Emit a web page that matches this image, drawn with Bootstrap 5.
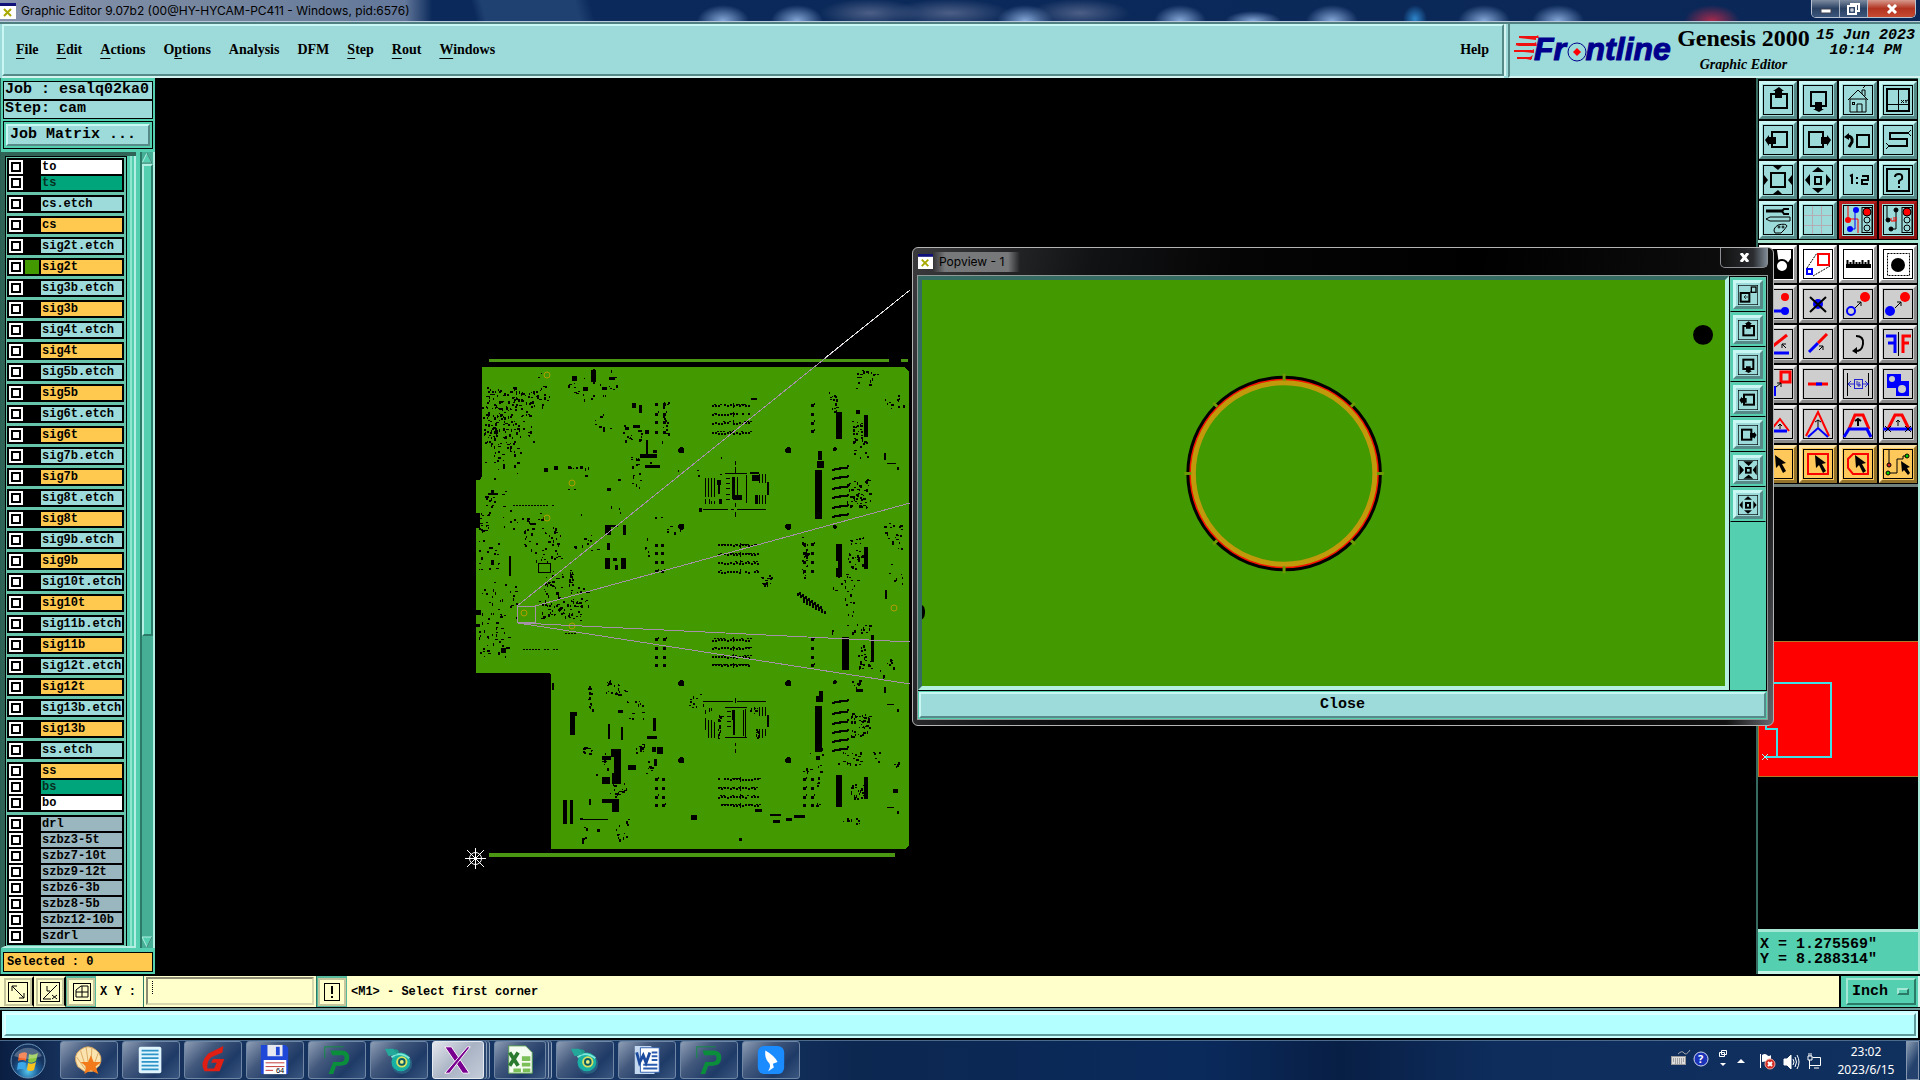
<!DOCTYPE html>
<html lang="en">
<head>
<meta charset="utf-8">
<meta name="viewport" content="width=device-width, initial-scale=1">
<title>Graphic Editor 9.07b2</title>
<link href="https://cdn.jsdelivr.net/npm/bootstrap@5.3.0/dist/css/bootstrap.min.css" rel="stylesheet">
<style>
:root{--panel:#9cdbda;--teal:#54cfaf;--pale:#b4efe4;--deep:#356b60;--shade:#568a88;--lit:#c9f7f4}
body{background:#000;color:#000;font:bold 15px/18px "Liberation Mono",monospace;height:100vh;overflow:hidden}
button,input,select{font:inherit;color:inherit;padding:0;border-radius:0}
.ui-font{font:normal 12px/16px "Noto Sans",sans-serif}
.cap-font{font:normal 12px/16px Inter,"Noto Sans",sans-serif}
.small-mono{font-size:12px;line-height:16px}
/* window title */
.title-strip{height:22px;border-bottom:1px solid #b7c9d8;background:
 radial-gradient(ellipse 26px 16px at 723px 21px,#86a9da,transparent),
 radial-gradient(ellipse 26px 16px at 797px 21px,#86a9da,transparent),
 radial-gradient(ellipse 50px 14px at 870px 13px,#4c5f86,transparent),
 radial-gradient(ellipse 60px 14px at 950px 13px,#4c5f86,transparent),
 radial-gradient(ellipse 50px 14px at 1080px 13px,#4c5f86,transparent),
 radial-gradient(ellipse 28px 16px at 1025px 21px,#86a9da,transparent),
 radial-gradient(ellipse 26px 16px at 1180px 21px,#86a9da,transparent),
 radial-gradient(ellipse 28px 10px at 1253px 21px,#86a9da,transparent),
 radial-gradient(ellipse 26px 16px at 1332px 21px,#86a9da,transparent),
 radial-gradient(ellipse 12px 14px at 1415px 19px,#2d86cc,transparent),
 radial-gradient(ellipse 26px 16px at 1484px 21px,#86a9da,transparent),
 radial-gradient(ellipse 26px 16px at 1558px 21px,#86a9da,transparent),
 radial-gradient(ellipse 28px 16px at 1712px 21px,#a82a4c,transparent),
 linear-gradient(75deg,transparent 460px,#1f4172 470px,#1f4172 560px,transparent 575px),
 linear-gradient(90deg,#8793ad 0,#76879f 200px,#62779a 405px,#0b2a5b 432px,#0a2757 100%)}
.title-strip .caption{padding-left:5px}
.sys-btns{height:18px;border:1px solid #b9c3d0;border-top:0;border-radius:0 0 5px 5px;overflow:hidden}
.sys-btns button{border:0;border-right:1px solid #a8b4c4;background:linear-gradient(#7d8ba0,#2a4163 50%,#3c567c);width:28px;display:flex;align-items:center;justify-content:center}
.sys-btns button:last-child{width:47px;border-right:0;background:linear-gradient(#d79a8e,#b23320 50%,#c84a30)}
/* header */
.head-row{height:56px;background:var(--panel);border-top:2px solid #4f7f80}
.menu-panel{border:2px solid var(--lit);border-right-color:var(--shade);border-bottom-color:var(--shade);box-shadow:0 2px 0 #d4f4f2,2px 0 0 #d4f4f2;margin:0 3px 2px 2px;padding:0 13px 0 12px}
.menu-panel a{font:bold 14px/20px "Liberation Serif",serif;color:#000;text-decoration:none}
.menu-panel a u{text-underline-offset:4px}
.menu-list{gap:18px}
.brand-panel{width:412px;border-left:2px solid var(--shade);border-bottom:2px solid #d4f4f2;margin-left:1px;padding-left:4px}
.brand-name{width:135px}
.brand-title{font:bold 24px/28px "Liberation Serif",serif}
.brand-sub{font:italic bold 14px/18px "Liberation Serif",serif}
.brand-date{font:italic bold 15px/15px "Liberation Mono",monospace}
/* left side */
.side-left{width:155px;background:var(--teal);border-left:1px solid #2b6154;padding-top:3px}
.info-box{border:1px solid #000;background:var(--panel);margin:0 2px 0 2px;padding:0 1px;height:19px;line-height:16px;white-space:nowrap}
.bevel{border:2px solid;border-color:var(--lit) var(--shade) var(--shade) var(--lit);background:var(--panel)}
.matrix-box{border:1px solid #000;margin:2px 2px 3px 2px;padding:2px}
.matrix-box button{height:22px;padding-left:2px}
.layer-frame{border-left:4px solid #2f6457;border-top:4px solid #2f6457;border-bottom:2px solid var(--pale)}
.layer-list{width:122px;border:1px solid #000;border-bottom:0;padding:1px 1px 0 1px;background:#66c5aa;overflow:hidden}
.layer-set{background:#000;padding:2px 2px 0 2px;margin-bottom:3px;width:117px}
.layer-row{height:16px;gap:2px}
.layer-row input{appearance:none;width:14px;height:14px;margin:0;background:#fff;border:2px solid #fff;box-shadow:inset 0 0 0 2px #000;flex:none}
.swatch{width:14px;height:14px;flex:none}
.layer-row label{width:81px;height:14px;font-size:12px;line-height:14px;padding-left:1px;white-space:nowrap}
.k-w{background:#fff}.k-g{background:#00a57c;color:#06301f}.k-c{background:var(--panel)}.k-o{background:#ffc84e}.k-d{background:#9ab6be}
.list-edge{width:9px;background:var(--teal);border-left:3px solid var(--teal);box-shadow:inset 2px 0 0 #8fe6cf,inset -2px 0 0 var(--pale)}
.scroll-rail{width:15px;margin-left:4px;background:#45ae94;border-left:2px solid #2b7a67;border-right:2px solid var(--pale)}
.scroll-thumb{height:472px;background:var(--teal);border:2px solid;border-color:var(--pale) #2b7a67 #2b7a67 var(--pale)}
.sel-box{border:1px solid #000;background:#ffc84e;margin:4px 2px 2px 2px;height:20px;padding:1px 3px}
/* right side */
.side-right{width:164px;border-left:2px solid #356b60;border-right:2px solid #a5e8d5}
.tool-grid{display:grid;grid-template-columns:repeat(4,1fr);gap:2px;padding:1px}
.tool-grid.first{background:#000;padding-top:2px;border-top:1px solid var(--deep);border-bottom:3px solid #a9e6d2}
.tool-grid.second{border-bottom:3px solid #70807c;padding-top:2px}
.tool{height:38px;border:3px solid;display:flex;align-items:center;justify-content:center}
.tool svg{width:30px;height:30px}
.t-c{background:var(--panel);border-color:var(--lit) var(--shade) var(--shade) var(--lit)}
.t-r{background:var(--panel);border-color:#b81f1f #8d1212 #8d1212 #b81f1f}
.t-w{background:#fff;border-color:#fff #999 #999 #fff}
.t-g{background:#cecece;border-color:#ececec #8a8a8a #8a8a8a #ececec}
.t-o{background:#ffc85a;border-color:#ffe6a8 #94732c #94732c #ffe6a8}
.coord-box{height:45px;background:var(--teal);border-top:3px solid #a5e8d5;border-bottom:3px solid #c4f2e4;padding:5px 2px 0;line-height:15px;white-space:pre}
/* popup */
.pop-win{position:absolute;left:912px;top:169px;width:862px;height:479px;border:1px solid #b4b4b4;border-radius:6px;background:linear-gradient(100deg,#3a3a3c 0,#111214 180px,#050505 320px,#000 60%,#111 95%,#666a70);padding:0 5px 5px 4px;z-index:5}
.pop-cap{height:27px;padding-left:1px}
.pop-cap .glow{color:#000;background:linear-gradient(90deg,transparent,#77787a 12px,#77787a 75px,transparent);padding:2px 16px 2px 6px}
.pop-x{width:48px;height:20px;border:1px solid #8b8f94;border-top:0;border-radius:0 0 5px 5px;background:linear-gradient(90deg,#111,#2a2c30 70%,#7d8894);display:flex;align-items:center;justify-content:center}
.pop-body{border:1px solid #8f9a98;background:#000}
.pop-view{border:4px solid;border-color:#356b60 #b4efdf #b4efdf #356b60;background:#439900}
.pop-tools{width:36px;background:var(--teal);margin:1px 1px 0 1px}
.pop-tools .cell{border:1px solid #6ac7b2;border-bottom:1px solid #000;padding:2px}
.pop-tools .tool{width:30px;height:29px}
.pop-tools .tool svg{width:20px;height:20px;stroke-width:3}
.pop-close{height:29px;border-top:1px solid #000;background:var(--teal);padding:1px}
/* bottom rows */
.prompt-row{height:34px;background:#ffffcc;border-top:2px solid #000;border-bottom:1px solid #000;padding-left:2px}
.pbtn{width:32px;background:#ffffcc;border:2px solid #ffffcc;border-right:2px solid #000;display:flex;align-items:center;justify-content:center}
.pbtn svg{width:24px;height:24px;outline:2px solid #c6c69c}
.pbtn.on{border:3px solid #56b99c;width:30px}
.xy-label{width:47px}
.xy-input{width:168px;border:2px solid #8d8d76;border-right-color:#d9d9b0;border-bottom-color:#d9d9b0;background:repeating-linear-gradient(#000 0 1px,#ffffcc 1px 2px) 4px 2px/1px 14px no-repeat #ffffcc;outline:0;padding-left:4px}
.xy-wrap{border-left:1px solid #2b7a67;border-right:1px solid #2b7a67;padding:1px 2px 2px 2px}
.unit-wrap{width:81px;border-left:2px solid #000;border-right:2px solid #d8f4ec;background:var(--teal);padding:2px 2px 2px 5px}
.unit-sel{width:100%;height:27px;appearance:none;border:2px solid;border-color:#a5e8d5 #2b7a67 #2b7a67 #a5e8d5;padding:0 4px;outline:0;background:var(--teal);font-size:15px}
.unit-mark{position:absolute;right:9px;top:12px;width:12px;height:7px;border:2px solid;border-color:#a5e8d5 #2b7a67 #2b7a67 #a5e8d5;pointer-events:none}
.message-row{height:32px;background:#000;border-top:2px solid #6f9999;padding:0}
.message-row div{background:#b3ffff;border:2px solid;border-color:#dcffff #5f9a9a #5f9a9a #dcffff;outline:2px solid #c9ffff;outline-offset:0;margin:3px 4px 4px 4px}
/* taskbar */
.task-row{height:40px;background:linear-gradient(90deg,#0a1e42 0,#15305a 60px,#173766 700px,#0c2750 860px,#0a2a5c 1200px,#081f45 1340px,#0e2d5d 1500px,#10305e 100%);border-top:1px solid #4c6b8c;color:#fff}
.orb{width:60px;background:none;border:0}
.task-btn{width:58px;height:38px;margin-right:4px;border:1px solid #6f86a4;border-radius:3px;background:linear-gradient(135deg,#8d9db4 0,#43597d 35%,#1e3a66 70%,#3a5781);display:flex;align-items:center;justify-content:center}
.task-btn.active{background:linear-gradient(135deg,#e3e6ec,#a9b3c4 50%,#c4ccd9);border-color:#e5e9f0}
.task-btn.stack{width:52px;margin-right:10px;box-shadow:2px 0 0 #2a4570,3px 0 0 #8fa2bb,5px 0 0 #2a4570,6px 0 0 #8fa2bb}
.clock{width:80px;line-height:18px}
.desk-peek{width:13px;border:1px solid #8497ae;background:linear-gradient(120deg,#8b9cb2,#24426d 60%);margin-right:1px}
</style>
</head>
<body class="d-flex flex-column">
<header class="title-strip d-flex align-items-center flex-shrink-0 cap-font">
  <svg width="16" height="16" viewBox="0 0 16 16" aria-hidden="true"><rect width="16" height="16" fill="#fff"/><rect width="16" height="3" fill="#10107a"/><path d="M4 6l7 7M11 6l-7 7" stroke="#a8a800" stroke-width="2"/></svg>
  <span class="caption flex-fill">Graphic Editor 9.07b2 (00@HY-HYCAM-PC411 - Windows, pid:6576)</span>
  <div class="sys-btns d-flex align-self-start me-1">
    <button aria-label="Minimize"><svg width="12" height="10"><rect x="1" y="5" width="10" height="4" fill="#fff" stroke="#445"/></svg></button>
    <button aria-label="Restore"><svg width="13" height="12" fill="none" stroke="#fff" stroke-width="2"><path d="M4 3V1h8v7h-2"/><rect x="1" y="3" width="8" height="8"/><rect x="4" y="6" width="2" height="2" stroke-width="1"/></svg></button>
    <button aria-label="Close"><svg width="12" height="10"><path d="M2 1l8 8M10 1l-8 8" stroke="#fff" stroke-width="3"/></svg></button>
  </div>
</header>

<div class="head-row d-flex flex-shrink-0">
  <nav class="menu-panel d-flex flex-fill align-items-center justify-content-between">
    <div class="menu-list d-flex">
      <a href="#"><u>F</u>ile</a><a href="#"><u>E</u>dit</a><a href="#"><u>A</u>ctions</a><a href="#">O<u>p</u>tions</a><a href="#">Analysis</a><a href="#">DFM</a><a href="#"><u>S</u>tep</a><a href="#"><u>R</u>out</a><a href="#"><u>W</u>indows</a>
    </div>
    <a href="#">Help</a>
  </nav>
  <div class="brand-panel d-flex">
    <svg width="162" height="52" viewBox="0 0 162 52" role="img" aria-label="Frontline">
      <g fill="#f01010"><path d="M5 14l18-2 1-1 1 3h-3z"/><path d="M5 14h17v2z"/><path d="M1 21l18-1 3-2 1 4H5z"/><path d="M0 27h17l3-2v4z"/><path d="M4 33h12l3-2-2 5z"/><path d="M5 13h18M2 20h18M0 27h18M3 34h15" stroke="#f01010" stroke-width="2"/></g>
      <text x="20" y="36" font-family="Liberation Sans,sans-serif" font-size="32" font-weight="bold" font-style="italic" fill="#00008c" stroke="#00008c">Fr<tspan fill="none" stroke="none">o</tspan>ntline</text>
      <circle cx="63" cy="28" r="9" fill="none" stroke="#00008c" stroke-width="1"/><path d="M63 24l4 4-4 4-4-4z" fill="#f00"/>
    </svg>
    <div class="brand-name text-center"><div class="brand-title">Genesis 2000</div><div class="brand-sub pt-1">Graphic Editor</div></div>
    <div class="brand-date text-center flex-fill pt-1">15 Jun 2023<br>10:14 PM</div>
  </div>
</div>

<main class="d-flex flex-fill position-relative" style="min-height:0">
  <aside class="side-left d-flex flex-column flex-shrink-0">
    <div class="info-box">Job : esalq02ka0</div>
    <div class="info-box">Step: cam</div>
    <div class="matrix-box"><button class="bevel w-100 text-start d-flex align-items-center">Job Matrix ...</button></div>
    <div class="d-flex flex-fill" style="min-height:0">
      <div class="layer-frame d-flex"><div class="layer-list" id="layers"></div><div class="list-edge"></div></div>
      <div class="scroll-rail d-flex flex-column" aria-hidden="true">
        <svg width="11" height="12"><path d="M5 1l5 10H0z" fill="#54cfaf" stroke="#b4efe4"/><path d="M5 1l5 10H0" fill="none" stroke="#2b7a67"/></svg>
        <div class="scroll-thumb"></div>
        <svg class="mt-auto" width="11" height="12"><path d="M0 1h10L5 11z" fill="#54cfaf" stroke="#b4efe4"/><path d="M10 1L5 11" stroke="#2b7a67"/></svg>
      </div>
    </div>
    <div class="sel-box small-mono">Selected : 0</div>
  </aside>

  <section class="flex-fill" style="min-width:0">
    <svg id="board" class="w-100 h-100 d-block" viewBox="155 78 1601 896" preserveAspectRatio="xMinYMin meet" role="img" aria-label="Board view">
      <g shape-rendering="crispEdges">
        <path d="M489 359h400v3h-400zM901 359h7v3h-7zM489 853h406v4h-406z" fill="#4b9714"/>
        <path d="M482 367H904l5 4V846l-4 3H551V675l-2-2H476V480h4l2-4z" fill="#439900"/>
        <g transform="translate(460 340) scale(.333333)"><path id="partA" fill="#000"/></g>
        <g transform="translate(460 600) scale(.333333)"><path id="partB" fill="#000"/></g>
      </g>
      <g fill="none" stroke="#b09c00"><circle cx="547" cy="375" r="3"/><circle cx="572" cy="483" r="3"/><circle cx="547" cy="518" r="3"/><circle cx="524" cy="613" r="3"/><circle cx="894" cy="608" r="3"/><circle cx="572" cy="626" r="3"/></g>
      <g fill="none" stroke="#a592a8" shape-rendering="crispEdges"><path d="M517.500 606.500H535V622.500H517.500zM517 606L910 290M535 606L910 503M520 623L910 642M518 623L910 684"/></g>
      <path d="M825 358L910 290" stroke="#e8e8e8" fill="none" shape-rendering="crispEdges"/>
      <g fill="none" stroke="#fff"><circle cx="475.500" cy="858.500" r="6"/><path d="M465 858.500h21M475.500 848v21M467 850l17 17M484 850l-17 17"/></g>
    </svg>
  </section>

  <aside class="side-right d-flex flex-column flex-shrink-0">
    <div class="tool-grid first" id="tools1"></div>
    <div class="tool-grid second" id="tools2"></div>
    <svg class="flex-fill" style="min-height:0" viewBox="0 0 160 442" preserveAspectRatio="none" shape-rendering="crispEdges" role="img" aria-label="Overview">
      <rect x="0" y="154" width="160" height="135" fill="red" stroke="#b07828"/>
      <path d="M9 196H73V270H7M8 196V242H19V270" fill="none" stroke="#3fe0e6" stroke-width="2"/>
      <path d="M4 267l6 6M10 267l-6 6" stroke="#9ff" fill="none"/>
    </svg>
    <div class="coord-box">X = 1.275569"
Y = 8.288314"</div>
  </aside>

  <section class="pop-win d-flex flex-column" aria-label="Popview">
    <div class="pop-cap d-flex align-items-center cap-font">
      <svg width="15" height="15" viewBox="0 0 16 16" aria-hidden="true"><rect width="16" height="16" fill="#fff"/><rect width="16" height="3" fill="#10107a"/><path d="M4 6l7 7M11 6l-7 7" stroke="#a8a800" stroke-width="2"/></svg>
      <span class="glow">Popview - 1</span>
      <button class="pop-x ms-auto align-self-start" aria-label="Close popview"><svg width="11" height="9"><path d="M2 0l7 9M9 0l-7 9" stroke="#fff" stroke-width="3"/></svg></button>
    </div>
    <div class="pop-body d-flex flex-column flex-fill" style="min-height:0">
      <div class="d-flex flex-fill" style="min-height:0">
        <div class="pop-view flex-fill" style="min-width:0">
          <svg class="w-100 h-100 d-block" viewBox="922 280 805 406" preserveAspectRatio="xMinYMin meet" role="img" aria-label="Magnified hole">
            <g fill="none"><circle cx="1285" cy="474" r="96" stroke="#000" stroke-width="4"/><circle cx="1285" cy="474" r="94" stroke="#f51400" stroke-width="2"/><circle cx="1285" cy="474" r="91" stroke="#c19a0c" stroke-width="5"/>
            <path d="M1285 374v7M1285 567v7M1185 474h7M1378 474h7M1214 403l4 4M1352 541l4 4M1356 403l-4 4M1218 541l-4 4" stroke="#6c9a04" stroke-width="3"/></g>
            <circle cx="1705" cy="335" r="10"/><ellipse cx="922" cy="613" rx="3" ry="7"/>
          </svg>
        </div>
        <div class="pop-tools" id="poptools"></div>
      </div>
      <div class="pop-close"><button class="bevel w-100 h-100 d-flex align-items-center justify-content-center">Close</button></div>
    </div>
  </section>
</main>

<div class="prompt-row d-flex flex-shrink-0 small-mono">
  <button class="pbtn" aria-label="Snap line"><svg viewBox="0 0 24 24" fill="none" stroke="#000"><rect x="2.500" y="2.500" width="19" height="19"/><path d="M6 6l12 12M6 11V6h5M13 18h5v-5"/></svg></button>
  <button class="pbtn" aria-label="Snap angle"><svg viewBox="0 0 24 24" fill="none" stroke="#000"><rect x="2.500" y="2.500" width="19" height="19"/><path d="M5 19L19 5M5 19h8M9 6v5h3M14 19l5-4M14 15l5 4"/></svg></button>
  <button class="pbtn on" aria-label="Grid snap"><svg viewBox="0 0 24 24" fill="none" stroke="#000"><rect x="4.500" y="3.500" width="17" height="17"/><path d="M7 17V10l5-4h7v11zM13 6v11M7 12h12"/></svg></button>
  <label for="xy" class="xy-label align-self-center ps-1">X Y :</label>
  <div class="xy-wrap d-flex"><input id="xy" class="xy-input" type="text"></div>
  <button class="pbtn on" aria-label="Apply"><svg viewBox="0 0 24 24" fill="none" stroke="#000"><rect x="4.500" y="3.500" width="15" height="17"/><path d="M12 6v8M12 16v2" stroke-width="2"/></svg></button>
  <span class="align-self-center ps-1 flex-fill">&lt;M1&gt; - Select first corner</span>
  <div class="unit-wrap position-relative"><select class="unit-sel" aria-label="Units"><option>Inch</option><option>MM</option></select><span class="unit-mark"></span></div>
</div>
<div class="message-row d-flex flex-shrink-0"><div class="flex-fill"></div></div>

<footer class="task-row d-flex flex-shrink-0 ui-font">
  <button class="orb" aria-label="Start"><svg width="40" height="38" viewBox="0 0 40 38"><defs><radialGradient id="og" cy=".8"><stop offset="0" stop-color="#55c8f0"/><stop offset=".6" stop-color="#1c5c96"/><stop offset="1" stop-color="#16345e"/></radialGradient></defs><circle cx="18" cy="19" r="17" fill="url(#og)" stroke="#6d94b8"/><path d="M9 12q5-3 8-1l-1 8q-4-2-8 0z" fill="#f0652a"/><path d="M19 12q4 2 9-1l-2 8q-4 3-8 1z" fill="#8cc63f"/><path d="M8 21q4-2 8 0l-1 7q-4-2-8 0z" fill="#3da8e8"/><path d="M18 21q4 2 8-1l-2 8q-4 2-7 0z" fill="#fcc21c"/><path d="M4 14a15 13 0 0 1 28 0q-14 6-28 0" fill="#fff" opacity=".25"/></svg></button>
  <div class="d-flex flex-fill" id="tasks"></div>
  <div class="d-flex align-items-center" aria-hidden="true">
    <svg width="156" height="30" viewBox="0 0 156 30" fill="none" stroke="#fff">
      <path d="M8 8q4-4 6-1t6-3" stroke="#aaa"/><rect x="1.500" y="10.500" width="14" height="8" fill="#ddd" stroke="#999"/><path d="M3 13h11M3 15h11M5 17h7" stroke="#666" stroke-dasharray="1 1"/>
      <circle cx="31" cy="13" r="7" fill="#1a33b8" stroke="#cfd6ee"/><text x="28" y="17" fill="#fff" stroke="none" font-size="11" font-weight="bold" font-family="Noto Sans">?</text>
      <path d="M51.500 4.500h5v4h-5zM49.500 6.500h5v4h-5z"/><path d="M50 17h6l-3 3z" fill="#fff" stroke="none"/><path d="M67 17h8l-4-4z" fill="#fff" stroke="none"/>
      <path d="M90.500 8v14"/><path d="M92 9q3-2 5 0t4 0v7q-3 1-4 0t-5 0z" fill="#fff" stroke="none"/><circle cx="100" cy="18" r="5" fill="#d42a20" stroke="#f0a8a0"/><path d="M98 16l4 4M102 16l-4 4" stroke-width="2"/>
      <path d="M114 13h3l4-4v14l-4-4h-3z" fill="#fff"/><path d="M123 13q2 3 0 6M125 11q3 5 0 10M127 9q4 7 0 14"/>
      <path d="M142.500 11.500h8v8h-11M139.500 14v9M138 10h4v4h-4zM139 7v3M141 7v3M144 22h5"/>
    </svg>
  </div>
  <div class="clock text-center align-self-center">23:02<br>2023/6/15</div>
  <button class="desk-peek" aria-label="Show desktop"></button>
</footer>

<script src="https://cdn.jsdelivr.net/npm/bootstrap@5.3.0/dist/js/bootstrap.bundle.min.js"></script>
<script>
/* layer list: groups separated by "|" ; entries are name:kind */
const groups = ('to:w ts:g|cs.etch:c|cs:o|' +
  ['2t','3b','4t','5b','6t','7b','8t','9b','10t','11b','12t','13b'].map(n => `sig${n}.etch:c|sig${n}:o`).join('|') +
  '|ss.etch:c|ss:o bs:g bo:w|drl:d szbz3-5t:d szbz7-10t:d szbz9-12t:d szbz6-3b:d szbz8-5b:d szbz12-10b:d szdrl:d').split('|');
document.getElementById('layers').innerHTML = groups.map(g => '<div class="layer-set">' + g.split(' ').map(e => {
  const [n, k] = e.split(':');
  return `<div class="layer-row d-flex"><input type="checkbox" id="l-${n}"><span class="swatch" ${n === 'sig2t' ? 'style="background:#439900"' : ''}></span><label class="k-${k}" for="l-${n}">${n}</label></div>`;
}).join('') + '</div>').join('');

/* icon drawings on a 30 x 30 grid */
const cur = '<path d="M12 6l1 13 3-3 4 8 3-2-4-7 4-1z" fill="#000" stroke="none"/>';
const light = '<rect x="19" y="2.500" width="10" height="25" stroke="#000" stroke-width="1" fill="#9cdbda"/><circle cx="24" cy="7" r="4" fill="red" stroke="#000" stroke-width="1"/><circle cx="24" cy="15" r="3" stroke="#000" stroke-width="1"/><circle cx="24" cy="23" r="3" stroke="#000" stroke-width="1"/>';
const I = {
 up:'<rect x="8" y="9" width="16" height="14"/><path d="M16 2l5 4h-2v7h-7V6h-2z" fill="#000" stroke="none"/>',
 down:'<rect x="8" y="7" width="15" height="14"/><path d="M16 27l5-3h-2v-7h-7v7h-2z" fill="#000" stroke="none"/>',
 left:'<rect x="9" y="7" width="15" height="15"/><path d="M2 15l4-5v2h7v7H6v2z" fill="#000" stroke="none"/>',
 right:'<rect x="6" y="7" width="14" height="15"/><path d="M28 15l-4-5v2h-6v7h6v2z" fill="#000" stroke="none"/>',
 home:'<g stroke-width="1"><path d="M5 15L15 5l10 10M7 14v13h16V14zM19 9V5h3v6M20 3l2-2M14 27v-8h5v8"/><rect x="9.500" y="17.500" width="2" height="2"/></g>',
 xy:'<rect x="4" y="4" width="22" height="22"/><path d="M15.500 4v22M4 19.500h22" stroke-width="1"/><path d="M18 15l3 3M21 15l-3 3M22 15l1 1 2-1M23 16v2" stroke-width="1"/>',
 undo:'<rect x="14" y="10" width="12" height="12"/><path d="M4 11q6 0 5 6l-3 5" stroke-width="3"/><path d="M1 12l5-4v7z" fill="#000" stroke="none"/>',
 snake:'<path d="M25 8H7v6h17v7H6"/><path d="M25 8l3-3M25 8l3 3M6 21l-3-3M6 21l-3 3" stroke-width="1"/>',
 fit:'<rect x="8" y="8" width="14" height="14"/><g fill="#000" stroke="none"><path d="M10 1h9l-4 4zM10 29h9l-4-4zM1 10v10l4-5zM29 10v10l-4-5z"/></g>',
 zin:'<rect x="12" y="12" width="7" height="7"/><g fill="#000" stroke="none"><path d="M8 2h15l-7 7zM8 28h15l-7-6zM2 7v16l7-8zM28 7v16l-6-8z"/></g>',
 out:'<rect x="12" y="12" width="6" height="7"/><g fill="#000" stroke="none"><path d="M15 2l6 5H9zM15 28l6-5H9zM2 15l5-6v12zM28 15l-5-6v12z"/></g>',
 ratio:'<path d="M7 11l2-1v9M19 11h6v4h-6v4h6"/><path d="M13 12h2v2h-2zM13 17h2v2h-2z" fill="#000" stroke="none"/>',
 help:'<rect x="4" y="4" width="22" height="22"/><path d="M12 12q0-3 4-3t3 5l-3 2v3M16 21v2"/>',
 util:'<path d="M3 6h16" stroke-width="3"/><path d="M26 4h-5l-2 2 2 3h5"/><path d="M7 12h20v4H7l-4-2z" stroke-width="1"/><path d="M12 28q-3-4 3-8 8-2 9 1l-3 4-3 3z" stroke-width="1"/><circle cx="16" cy="22" r="1" stroke-width="1"/><circle cx="20" cy="22" r="1" stroke-width="1"/>',
 grid:'<path d="M9.500 1v28M18.500 1v28M1 10.500h28M1 20.500h28" stroke="#b4acb4" stroke-width="1"/>',
 netA:'<path d="M5 1v13h10v14" stroke="red" stroke-width="1"/><path d="M12 5v19H7" stroke="#00f" stroke-width="1"/><circle cx="5" cy="15" r="2" stroke="red" fill="red"/><circle cx="13" cy="5" r="2" stroke="#00f" fill="#00f"/><circle cx="7" cy="24" r="2" stroke="#00f" fill="#00f"/>'+light,
 netB:'<path d="M4 1v13M13 5v19H7" stroke-width="1"/><path d="M8 13v3h5v-4M11 12v4" stroke="red" stroke-width="1"/><g fill="#000" stroke-width="1"><circle cx="5" cy="15" r="2"/><circle cx="13" cy="5" r="2"/><circle cx="8" cy="24" r="2"/></g>'+light,
 neg:'<path d="M0 0h30v30H0z" fill="#000"/><path d="M14 1h14v8l-4 6h-8zM2 8h6v14H2z" fill="#fff" stroke="none"/><circle cx="19" cy="17" r="6" fill="#fff"/>',
 scale:'<rect x="15" y="5" width="11" height="11" stroke="red"/><rect x="4" y="20" width="5" height="5" stroke="#00f"/><path d="M4 19L14 4M10 27L27 17" stroke-width="1" stroke-dasharray="2 1"/>',
 ruler:'<path d="M3 17h25" stroke-width="4"/><path d="M4.500 11v7M7.500 13v5M10.500 11v7M13.500 13v5M16.500 13v5M19.500 11v7M22.500 13v5M25.500 11v7" stroke-width="2"/>',
 dot:'<rect x="4.500" y="4.500" width="22" height="22" stroke-width="1" stroke-dasharray="2 1"/><circle cx="15" cy="16" r="7" fill="#000" stroke="none"/>',
 link:'<path d="M4 22h18" stroke="#00f" stroke-width="3"/><circle cx="22" cy="22" r="4" fill="#00f" stroke="none"/><circle cx="22" cy="8" r="4" fill="red" stroke="none"/>',
 del:'<circle cx="15" cy="15" r="5" fill="#00f" stroke="none"/><path d="M7 8l16 15M23 8L7 23"/>',
 mvO:'<circle cx="8" cy="22" r="4" stroke="#00f"/><circle cx="22" cy="8" r="5" fill="red" stroke="none"/><path d="M12 19l6-6M14 13h4v4" stroke-width="1"/>',
 mvF:'<circle cx="7" cy="22" r="5" fill="#00f" stroke="none"/><circle cx="22" cy="8" r="5" fill="red" stroke="none"/><path d="M12 19l6-6M14 13h4v4" stroke-width="1"/>',
 rot:'<path d="M5 21L24 6" stroke="red" stroke-width="3"/><path d="M3 24h23" stroke="#00f" stroke-width="3"/><path d="M23 19l-4-4M19 19v-4h4" stroke-width="1"/>',
 ext:'<path d="M6 23l9-9" stroke="#00f" stroke-width="3"/><path d="M15 14l9-9" stroke="red" stroke-width="3"/><path d="M16 21l4-4M16 17h4v4" stroke-width="1"/>',
 arc:'<path d="M13 7q8 0 7 8t-9 7"/><path d="M9 22l5-4v7z" fill="#000" stroke="none"/>',
 mir:'<path d="M3 7h9v17M5 14h7" stroke="#00f" stroke-width="3"/><path d="M15.500 3v24" stroke-width="1"/><path d="M20 24V7h8M20 14h6" stroke="red" stroke-width="3"/>',
 cpy:'<rect x="18" y="3" width="9" height="10" stroke="red" stroke-width="3"/><path d="M13 18l5-4M14 14h4v4" stroke-width="1"/><rect x="3" y="17" width="10" height="10" fill="#00f" stroke="none"/>',
 seg:'<path d="M5 15h20" stroke="red" stroke-width="3"/><path d="M13 15h6" stroke="#00f" stroke-width="3"/>',
 gap:'<path d="M4.500 4v23M25.500 4v23" stroke-width="1"/><g stroke="#22c" stroke-width="1"><rect x="11.500" y="10.500" width="8" height="9"/><path d="M14 12v4h4M16 13v5M5 15h6M20 15h6M8 12l-3 3 3 3M22 12l3 3-3 3"/></g>',
 uni:'<path d="M4 5h14v7h8v15H13v-8H4z" fill="#00f" stroke="none"/><circle cx="9" cy="10" r="3" fill="#ccc" stroke="none"/><circle cx="19" cy="20" r="4" fill="#ccc" stroke="none"/>',
 tri:'<path d="M7 22l10-12 9 12" stroke="red"/><path d="M4 22h20" stroke="#00f" stroke-width="3"/><path d="M17 20v-5M15 17l2-2 2 2" stroke-width="1"/>',
 peak:'<path d="M3 27L15 3l11 24" stroke="red"/><path d="M5 28l10-9 10 9" stroke="#00f"/><path d="M15 18v-7M12 13l3-2 3 2" stroke-width="1"/>',
 trap:'<path d="M6 20L12 6h8l6 14" stroke="red" stroke-width="3"/><path d="M1 28l5-8h18l4 8" stroke="#00f" stroke-width="3"/><path d="M15 17v-7M12 12l3-2 3 2"/>',
 trx:'<path d="M5 20L12 6h7l7 14" stroke="red" stroke-width="3"/><path d="M0 20h29" stroke="#00f" stroke-width="3"/><path d="M15 17v-6M13 13l2-2 2 2M2 17l6 6M8 17l-6 6M22 17l6 6M28 17l-6 6" stroke-width="1"/>',
 sel:cur, selR:'<rect x="5" y="5" width="20" height="20" stroke="red"/>'+cur,
 selP:'<path d="M10 5h15v20H10l-5-6V10z" stroke="red"/>'+cur,
 net:'<path d="M6 1v15M5 24h9V10h6V7h4" stroke-width="1"/><g stroke-width="1"><circle cx="6" cy="16" r="2" fill="#c22"/><circle cx="24" cy="7" r="2" fill="#0c0"/><circle cx="5" cy="24" r="2" fill="#0c0"/></g><path d="M18 12l1 11 2-2 4 5 2-2-3-5 3-1z" fill="#000" stroke="none"/>',
 pop:'<rect x="4" y="12" width="13" height="13"/><rect x="20" y="3" width="7" height="8" stroke-width="2"/><path d="M15 18H9l3-3M9 18l3 3M17 12l3-3" stroke-width="1"/>'
};
const btn = (n, k) => `<button class="tool ${k}" aria-label="${n}"><svg viewBox="0 0 30 30" fill="none" stroke="#000" stroke-width="2" ><rect x=".5" y=".5" width="29" height="29" stroke-width="1"/>${I[n]}</svg></button>`;
const fill = (id, s) => document.getElementById(id).innerHTML = s;
fill('tools1', 'up down home xy left right undo snake fit out ratio help util grid netA netB'.split(' ').map(n => btn(n, n.startsWith('net') ? 't-r' : 't-c')).join(''));
fill('tools2', 'neg scale ruler dot link del mvO mvF rot ext arc mir cpy seg gap uni tri peak trap trx sel selR selP net'.split(' ').map((n, i) => btn(n, i < 4 ? 't-w' : i < 20 ? 't-g' : 't-o')).join(''));
fill('poptools', 'pop up down left right zin out'.split(' ').map(n => `<div class="cell">${btn(n, 't-c')}</div>`).join(''));

/* taskbar programs */
const disc = '<path d="M8 8q6-5 9 0-2 5-7 3z" fill="#1e9a8a"/><circle cx="20" cy="21" r="11" fill="#2a5f80"/><circle cx="19" cy="19" r="10" fill="#19b0a4"/><circle cx="20" cy="19" r="5" fill="#0c5a66" stroke="#d8e060" stroke-width="2"/><circle cx="20" cy="19" r="2" fill="#e8f080"/><path d="M9 14q8-7 19 1" stroke="#7fe8d8" fill="none" stroke-width="2"/><path d="M2 5h9l4 6-9 2z" fill="#24a89a"/>';
const pea = '<path d="M4 3v12M4 3h20" stroke="#0f9040" fill="none"/><path d="M10 7h12q8 0 8 8t-9 8h-5l-3 9h-5l5-13h8q4 0 4-4t-4-3h-9z" fill="#0b8e3c"/>';
const apps = [
 ['Shell','<path d="M5 24Q-1 12 8 6q8-6 16 0 9 7 4 17l-7 6h-9z" fill="#fbe3b0" stroke="#d9a860"/><path d="M8 7l6 19M14 4l3 22M20 4l-1 22M27 9l-6 17M4 14l9 13" stroke="#d9a860" fill="none"/><path d="M19 12l3 7 8 0-6 5 3 8-8-4-7 4 2-8-6-5 8 0z" fill="#f27a1a"/>'],
 ['Notes','<rect x="4" y="3" width="24" height="28" rx="2" fill="#dff4fc"/><path d="M7 7h18M7 11h18M7 15h18M7 19h18M7 23h18M7 27h18" stroke="#2d94c8" stroke-width="2"/>'],
 ['Genesis','<path d="M28 2L12 10Q2 20 8 29h16l5-13H17l-2 4h6l-3 6h-7q-1-7 4-12l12-5z" fill="#e01e14"/>'],
 ['Total Commander','<path d="M2 1h26l3 3v28H2z" fill="#2048d8"/><rect x="9" y="1" width="16" height="12" fill="#e8e8f0"/><rect x="18" y="3" width="4" height="9" fill="#2048d8"/><rect x="5" y="17" width="24" height="15" fill="#fff"/><path d="M7 20h20M7 24h20M7 28h8" stroke="#c03030"/><text x="18" y="31" font-size="8" font-family="Liberation Sans" fill="#000">64</text>'],
 ['P',pea],['Disc',disc],
 ['X server','<path d="M3 3h7l19 28h-7z" fill="#7a0090" stroke="#fff"/><path d="M27 3h3L8 31H3z" fill="#7a0090" stroke="#fff" stroke-width="1"/>','active stack'],
 ['Excel','<path d="M5 2h18l7 7v22H5z" fill="#f4fbf0" stroke="#58a050"/><path d="M19 13h9v5h-9zM19 20h9v4h-9zM10 26h8v4h-8zM20 26h8v4h-8z" fill="#7bbf58"/><path d="M6 9l9 14M15 9L6 23" stroke="#2b7a30" stroke-width="4"/>','stack'],
 ['Disc 2',disc],
 ['Word','<path d="M4 2h17l4 4v26H4z" fill="#c4d8f0"/><path d="M10 4h20v26H10z" fill="#fff" stroke="#2a5cb0"/><path d="M22 9h6M22 13h6M22 17h6M13 22h15M13 26h15" stroke="#2a5cb0" stroke-width="2"/><path d="M6 9l3 11 4-8 3 8 4-11" stroke="#1c4a9c" stroke-width="3" fill="none"/>'],
 ['P 2',pea],
 ['Lark','<rect x="3" y="2" width="28" height="30" rx="7" fill="#1a8cff"/><path d="M11 7q9 5 13 12l-5 2 1 4-6 4q4-7 0-10-4-4-3-12z" fill="#fff"/>']];
fill('tasks', apps.map(a => `<button class="task-btn ${a[2] || ''}" aria-label="${a[0]}"><svg width="32" height="32" viewBox="0 0 34 34">${a[1]}</svg></button>`).join(''));

/* board clearances */
let seed = 77;
const rnd = () => (seed = (seed * 16807) % 2147483647) / 2147483647;
const s3 = v => Math.round(v / 3) * 3;
const box = (x, y, w, h) => `M${s3(x)} ${s3(y)}h${Math.max(3, s3(w))}v${Math.max(3, s3(h))}h-${Math.max(3, s3(w))}z`;
const disk = (x, y, r) => box(x - r, y - r / 2, 2 * r, r) + box(x - r / 2, y - r, r, 2 * r) + box(x - r * .75, y - r * .75, r * 1.5, r * 1.5);
const specks = (x, y, w, h, n) => { let d = ''; for (let i = 0; i < n; i++) { const a = rnd() < .5; d += box(x + rnd() * w, y + rnd() * h, a ? 3 + rnd() * 6 : 3 + rnd() * 3, a ? 3 + rnd() * 3 : 3 + rnd() * 7); } return d; };
const pads = (x0, x1, ys) => ys.map(y => { let d = ''; for (let x = x0; x < x1; x += 9) if (rnd() < .95) d += box(x, y + (rnd() < .4 ? 3 : 0), 6, 7) + (rnd() < .5 ? box(x + 4, y - 1, 5, 4) : ''); return d; }).join('') + ys.map(y => box((x0 + x1) / 2 + 5, y - 4, 3, 16)).join('');
const cols = (xs, ys) => xs.map(x => ys.map(y => box(x, y, 8, 9) + (rnd() < .4 ? box(x + 9, y - 4, 3, 7) : '')).join('')).join('');
const comb = ys => ys.map(y => box(1122, y + 3, 20, 6) + box(1117, y + 6, 8, 6) + box(1138, y, 28, 6) + box(1160, y - 4, 7, 6)).join('');
const many = (f, l) => l.map(a => f(...a)).join('');
const diag = (x, y, dx, dy, n) => { let d = ''; for (let i = 0; i < n; i++) d += box(x + dx * i, y + dy * i, 6, 9); return d; };
const dash = (x0, x1, y) => { let d = ''; for (let x = x0; x < x1; x += 9) if (rnd() < .75) d += box(x, y, 5, 3); return d; };

let A = many(box, [[392,90,14,36],[398,87,6,45],[447,110,18,10],[369,141,15,13],[425,142,14,8],[337,107,14,14],[516,188,12,16],[538,195,8,25],[555,270,12,12],[519,255,22,8],[495,262,12,8],[558,300,6,42],[540,342,50,12],[578,330,12,10],[555,375,45,9],[252,384,12,12],[282,378,12,12],[323,378,8,8],[361,378,8,8],[441,444,12,9],[1128,216,18,80],[1212,225,12,66],[1074,333,12,28],[1070,362,20,22],[1066,390,20,146],[1188,210,12,12],[1128,612,18,50],[1134,662,12,22],[1128,684,18,26],[1212,621,12,66],[435,556,40,6],[436,556,18,30],[488,556,10,30],[441,610,9,22],[436,655,14,34],[484,655,14,32],[460,655,12,8],[466,675,9,15],[148,648,5,60],[94,660,8,14],[48,520,12,45],[48,812,14,12],[88,460,26,6],[93,450,8,12],[75,468,12,6],[1272,340,5,20],[1282,370,28,4],[1310,380,6,10],[1275,750,5,28],[234,668,3,30],[270,668,3,30],[236,670,36,3],[236,696,30,3],
 [736,413,3,57],[744,413,3,57],[754,413,3,57],[763,413,3,57],[736,478,3,15],[746,478,3,15],[754,484,3,10],[763,484,3,10],[771,420,12,14],[774,434,6,26],[777,478,9,15],[816,412,10,65],[820,465,28,15],[832,410,3,55],[857,405,3,85],[795,399,65,3],[798,413,12,3],[798,430,12,3],[798,445,12,3],[798,462,12,3],[798,478,12,3],[730,507,75,3],[812,507,10,3],[830,507,88,3],[826,363,3,12],[826,380,3,18],[826,490,3,12],[826,515,3,15],[897,402,3,26],[905,402,3,26],[914,402,3,26],[897,465,3,28],[905,465,3,28],[914,465,3,28],[870,396,28,6],[876,405,20,18],[886,465,10,28],[922,425,6,40],[873,175,18,6],[718,505,9,12]])
 + many(disk, [[663,330,9],[985,330,9],[1124,327,6],[663,560,9],[985,560,9],[1124,560,6]])
 + pads(757, 873, [192,220,245,275]) + pads(775, 893, [613,640,665,692])
 + cols([586,610], [190,218,244,272]) + cols([1054], [193,220,245,270]) + cols([586,604], [613,637,662,690]) + cols([1030,1054], [610,637,662,690])
 + comb([380,408,438,465,495,522]) + diag(1010,758,9,6,10) + diag(1018,756,9,6,8)
 + dash(160,300,495) + dash(315,348,447)
 + many(specks, [[70,140,100,180,105],[160,150,115,50,38],[200,95,60,90,12],[66,200,155,110,60],[70,310,115,110,25],[320,90,150,90,22],[395,220,50,50,8],[485,250,60,60,16],[512,350,35,90,16],[75,440,60,60,14],[50,515,40,60,20],[120,510,130,60,22],[190,560,115,110,44],[55,590,65,100,18],[50,720,120,115,32],[250,690,60,80,28],[330,740,55,60,24],[240,780,130,60,26],[340,580,75,60,10],[325,690,12,60,16],[1185,85,80,60,18],[1100,155,32,60,16],[1275,165,60,45,12],[1170,230,40,55,16],[1175,290,55,60,16],[1160,415,70,85,56],[1160,580,50,100,20],[1175,640,42,45,16],[1265,545,60,80,20],[1115,700,80,55,14],[1025,580,18,130,22],[1275,670,55,60,7],[900,705,33,30,14],[605,170,20,110,16],[555,590,10,60,5],[580,520,80,60,7],[640,350,150,60,5],[1150,740,40,90,9],[300,260,400,300,10],[330,375,60,14,6]]);

let B = many(box, [[330,337,20,12],[330,337,14,68],[453,448,30,25],[462,470,21,80],[456,520,14,32],[427,468,28,12],[427,530,25,22],[504,496,24,14],[576,442,12,16],[590,442,18,20],[582,478,9,22],[560,408,30,9],[578,355,9,38],[443,372,6,45],[483,380,6,40],[309,600,12,72],[330,600,9,72],[427,598,50,12],[456,608,20,26],[387,598,6,18],[360,654,10,6],[370,656,76,4],[474,330,15,8],[276,248,6,22],[1064,318,22,138],[1146,112,22,98],[1233,105,9,80],[1128,525,18,96],[1212,530,12,66],[1068,288,20,18],[1076,273,12,20],[1068,468,12,12],[694,645,18,15],[930,643,32,7],[940,660,22,8],[978,655,18,8],[1003,645,32,9],[885,626,22,8],[1188,266,20,8],[1272,262,6,18],[365,715,6,18],[411,687,9,9],[837,713,9,9],[48,30,14,12],[48,72,12,9],[124,145,14,14],[1282,312,20,4],[1312,328,6,10],[1282,620,20,4],[1312,634,6,8],[1298,568,14,12],
 [736,355,3,35],[744,360,3,53],[754,360,3,53],[763,365,3,48],[736,330,3,12],[746,325,3,12],[754,325,3,10],[730,303,90,3],[830,303,88,3],[826,294,3,14],[826,430,3,8],[826,446,3,12],[816,330,10,30],[819,360,6,45],[850,330,3,78],[856,326,3,84],[795,322,65,3],[795,411,65,3],[800,332,12,3],[800,348,12,3],[800,362,12,3],[800,378,12,3],[897,322,3,26],[905,322,3,26],[914,322,3,26],[897,387,3,26],[905,387,3,26],[914,387,3,22],[920,345,7,36]])
 + many(disk, [[663,250,9],[985,250,9],[1124,246,6],[663,481,9],[985,481,9]])
 + pads(757, 873, [116,141,167,193]) + pads(775, 893, [535,561,587,612])
 + cols([586,610], [115,141,167,192]) + cols([1054], [115,141,167,192]) + cols([586,607], [535,561,587,612]) + cols([1030,1054], [535,561,587,612])
 + comb([300,332,362,390,418,443]) + diag(1030,0,9,5,7) + dash(170,300,147) + dash(315,348,98)
 + many(specks, [[50,60,100,110,36],[235,0,130,50,26],[380,240,16,100,14],[437,240,66,42,22],[685,280,45,40,10],[500,300,56,70,12],[365,440,36,28,10],[527,430,26,28,14],[555,480,22,40,7],[404,455,40,90,12],[440,550,58,40,16],[465,650,38,75,12],[360,680,18,40,5],[1115,70,120,28,16],[1195,130,36,80,22],[1170,240,28,26,8],[1168,340,60,70,46],[1110,455,150,45,24],[1025,490,55,30,8],[1068,530,12,90,7],[1170,550,42,45,22],[1115,645,90,25,8],[1280,170,24,40,6],[1300,480,20,20,4],[868,318,28,24,9],[886,385,10,28,9],[772,335,12,80,18],[1020,440,80,30,4],[1200,200,80,40,5]]);
document.getElementById('partA').setAttribute('d', A);
document.getElementById('partB').setAttribute('d', B);
</script>
</body>
</html>
